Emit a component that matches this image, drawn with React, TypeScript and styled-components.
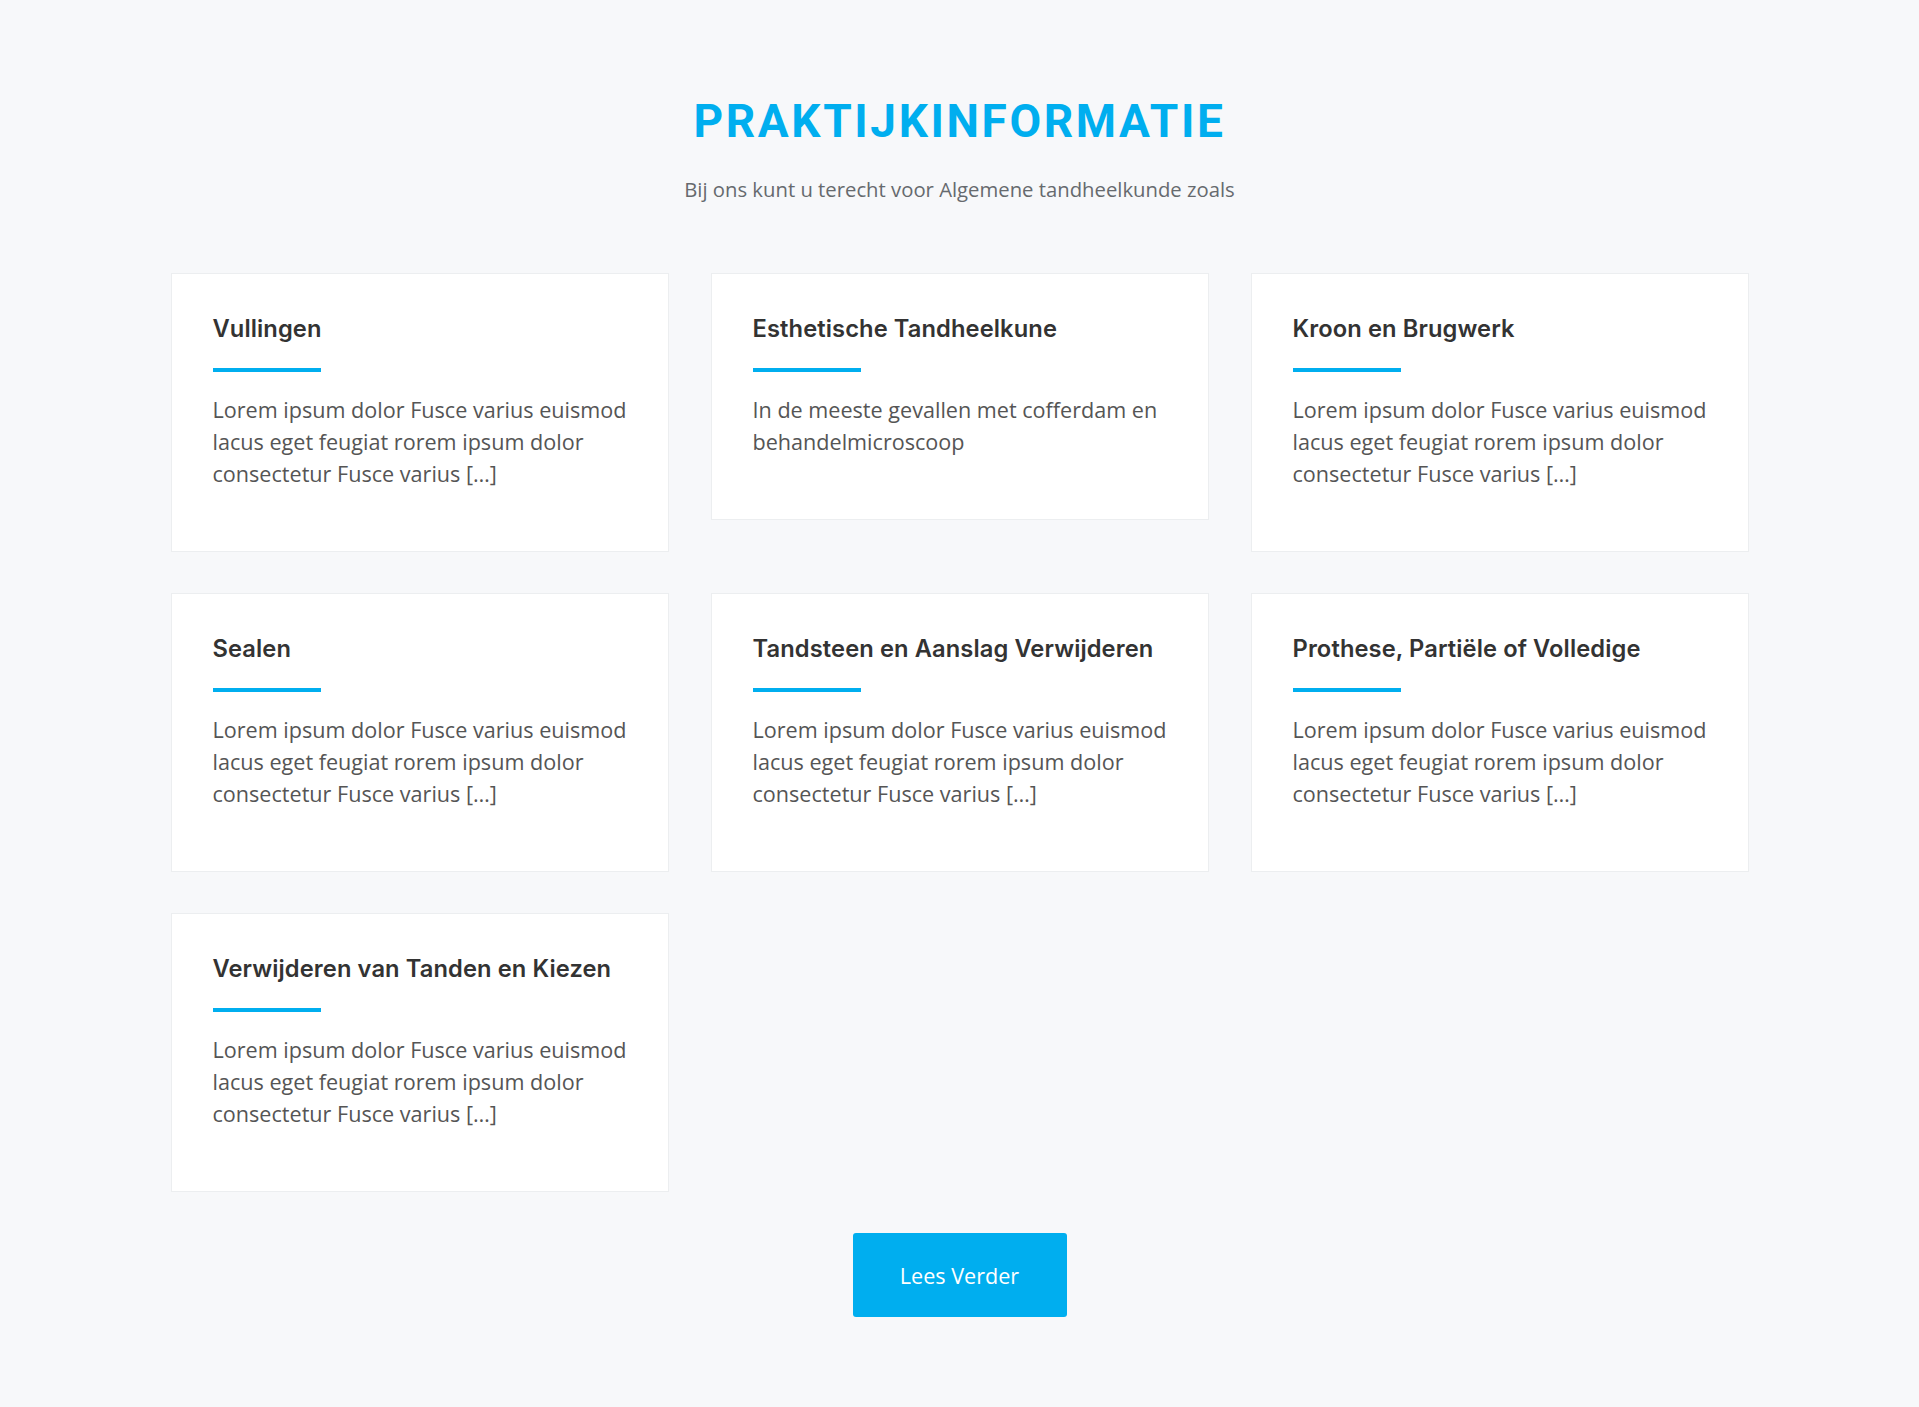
import React from "react";
import styled, { createGlobalStyle } from "styled-components";

const GlobalStyle = createGlobalStyle`
  html, body { margin: 0; padding: 0; background: #f7f8fa; }
  body { font-family: "Open Sans", "Liberation Sans", sans-serif; }
  * { box-sizing: border-box; }
`;

const Section = styled.section`
  min-height: 1407px;
  background: #f7f8fa;
  padding: 93px 0 80px;
  display: flex;
  flex-direction: column;
  align-items: center;
`;

const Title = styled.h2`
  margin: 0;
  font-family: "Roboto", "Inter", sans-serif;
  font-weight: 700;
  font-size: 46px;
  line-height: 56px;
  letter-spacing: 2.6px;
  color: #00aeef;
  text-transform: uppercase;
`;

const Subtitle = styled.p`
  margin: 25px 0 0;
  font-size: 20.3px;
  line-height: 30px;
  color: #666a6e;
`;

const Grid = styled.div`
  margin-top: 69px;
  width: 1578px;
  display: grid;
  grid-template-columns: repeat(3, 1fr);
  column-gap: 42px;
  row-gap: 41px;
  align-items: start;
`;

const Card = styled.div`
  background: #ffffff;
  border: 1px solid #eceef0;
  padding: 39px 36px 61px 41px;
`;

const CardTitle = styled.h3`
  margin: 0;
  font-family: "Inter", "Roboto", sans-serif;
  font-weight: 600;
  font-size: 23.7px;
  line-height: 32px;
  color: #333333;
  letter-spacing: 0.1px;
`;

const Rule = styled.div`
  width: 108px;
  height: 4px;
  background: #00aeef;
  margin: 23px 0 22px;
`;

const CardText = styled.p`
  margin: 0;
  font-size: 21.6px;
  line-height: 32px;
  color: #555555;
`;

const Button = styled.button`
  margin-top: 41px;
  width: 214px;
  height: 84px;
  border: none;
  border-radius: 3px;
  background: #00aeef;
  color: #ffffff;
  font-family: "Open Sans", "Liberation Sans", sans-serif;
  font-size: 21.6px;
  cursor: pointer;
`;

const lorem =
  "Lorem ipsum dolor Fusce varius euismod lacus eget feugiat rorem ipsum dolor consectetur Fusce varius […]";

const items = [
  { title: "Vullingen", text: lorem },
  {
    title: "Esthetische Tandheelkune",
    text: "In de meeste gevallen met cofferdam en behandelmicroscoop",
  },
  { title: "Kroon en Brugwerk", text: lorem },
  { title: "Sealen", text: lorem },
  { title: "Tandsteen en Aanslag Verwijderen", text: lorem },
  { title: "Prothese, Partiële of Volledige", text: lorem },
  { title: "Verwijderen van Tanden en Kiezen", text: lorem },
];

export default function App() {
  return (
    <>
      <GlobalStyle />
      <Section>
        <Title>Praktijkinformatie</Title>
        <Subtitle>Bij ons kunt u terecht voor Algemene tandheelkunde zoals</Subtitle>
        <Grid>
          {items.map((it) => (
            <Card key={it.title}>
              <CardTitle>{it.title}</CardTitle>
              <Rule />
              <CardText>{it.text}</CardText>
            </Card>
          ))}
        </Grid>
        <Button>Lees Verder</Button>
      </Section>
    </>
  );
}
